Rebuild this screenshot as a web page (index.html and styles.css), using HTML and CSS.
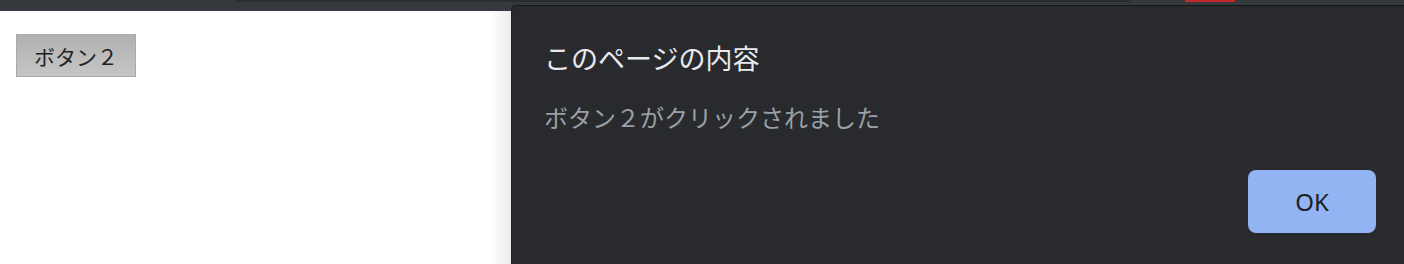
FILE: index.html
```html
<html>
    <head>
        <meta charset="utf-8">
        <link rel="stylesheet" href="styles.css">
        <title>ボタン２</title>
    </head>
    <body>
        <div class="toolbar">
            <span class="omnibox"></span>
            <span class="recording"></span>
        </div>
        <div class="page">
            <button class="pageButton" type="button">ボタン２</button>
        </div>
        <div class="alertShade"></div>
        <div class="alertDialog">
            <h1 class="alertTitle">このページの内容</h1>
            <p class="alertMessage">ボタン２がクリックされました</p>
            <div class="alertActions">
                <button class="okButton" type="button">OK</button>
            </div>
        </div>
    </body>
</html>
```

FILE: styles.css
```css
html, body {margin: 0; padding: 0; height: 100%; overflow: hidden;}
body {background: #FFFFFF; font-family: "Noto Sans CJK JP", "Noto Sans", sans-serif; position: relative;}

.toolbar {height: 11px; background: #35383c; position: relative;}
.toolbar span {position: absolute; top: 0; height: 2px;}
.omnibox {left: 235px; width: 895px; background: #2a2c2f; border-radius: 0 0 6px 6px;}
.recording {left: 1185px; width: 50px; background: #c2272b;}

.page {padding: 23px 16px;}
.pageButton {
    font-family: "Noto Sans CJK JP", sans-serif;
    font-size: 21px;
    line-height: 24px;
    color: #222;
    width: 120px;
    height: 43px;
    padding: 0;
    border: 1px solid #a9a9a9;
    border-radius: 0;
    background: linear-gradient(#b1b1b1, #c5c5c5);
}

/* soft shadow cast by the dialog onto the page */
.alertShade {
    position: absolute;
    left: 489px;
    top: 11px;
    bottom: 0;
    width: 22px;
    background: linear-gradient(to right, rgba(0,0,0,0), rgba(0,0,0,0.08));
}

.alertDialog {
    position: absolute;
    left: 511px;
    top: 5px;
    right: 0;
    bottom: 0;
    background: #292a2e;
    border-top: 1px solid #151618;
    border-left: 1px solid #1d1e21;
    border-top-left-radius: 5px;
    padding: 34px 28px 0 32px;
}
.alertTitle {margin: 0; font-size: 27px; line-height: 36px; font-weight: normal; color: #e8eaed;}
.alertMessage {margin: 25px 0 0 0; font-size: 24px; line-height: 32px; color: #9aa0a6;}
.alertActions {display: flex; justify-content: flex-end; margin-top: 37px;}
.okButton {
    width: 128px;
    height: 63px;
    border: 0;
    border-radius: 8px;
    background: #92b4f3;
    color: #202124;
    font-family: "Noto Sans", sans-serif;
    font-size: 24px;
    padding: 0;
}
```
